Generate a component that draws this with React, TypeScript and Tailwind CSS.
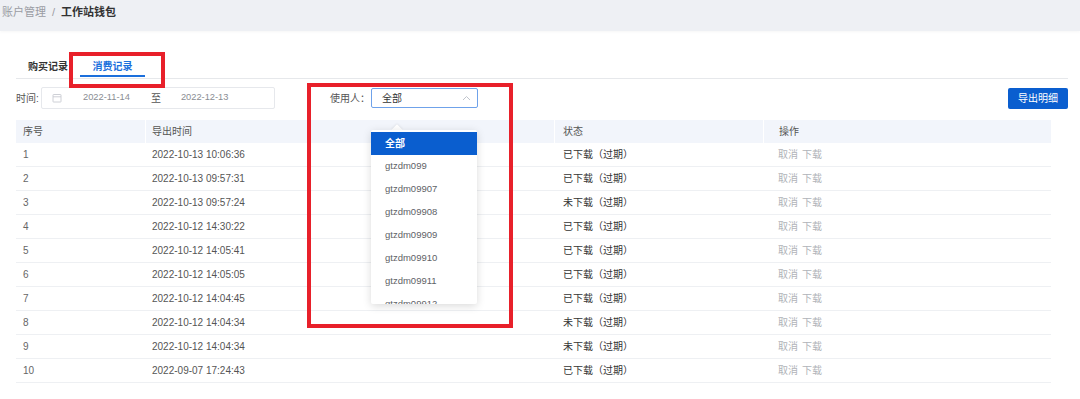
import { useState } from "react";

const ROWS = [
  { id: 1, time: "2022-10-13 10:06:36", status: "已下载（过期）" },
  { id: 2, time: "2022-10-13 09:57:31", status: "已下载（过期）" },
  { id: 3, time: "2022-10-13 09:57:24", status: "未下载（过期）" },
  { id: 4, time: "2022-10-12 14:30:22", status: "已下载（过期）" },
  { id: 5, time: "2022-10-12 14:05:41", status: "已下载（过期）" },
  { id: 6, time: "2022-10-12 14:05:05", status: "已下载（过期）" },
  { id: 7, time: "2022-10-12 14:04:45", status: "已下载（过期）" },
  { id: 8, time: "2022-10-12 14:04:34", status: "未下载（过期）" },
  { id: 9, time: "2022-10-12 14:04:34", status: "未下载（过期）" },
  { id: 10, time: "2022-09-07 17:24:43", status: "已下载（过期）" },
];

const USERS = ["全部", "gtzdm099", "gtzdm09907", "gtzdm09908", "gtzdm09909", "gtzdm09910", "gtzdm09911", "gtzdm09912"];

const FONT = "font-['Liberation_Sans','Noto_Sans_CJK_SC',sans-serif]";

function CalendarIcon() {
  return (
    <svg width="10" height="10" viewBox="0 0 10 10" fill="none" stroke="#c8cbd1" strokeWidth="0.9">
      <rect x="1" y="1.5" width="8" height="7.5" rx="0.5" />
      <line x1="1" y1="3.8" x2="9" y2="3.8" />
    </svg>
  );
}

export default function App() {
  const [tab, setTab] = useState(1);
  const [user, setUser] = useState("全部");

  return (
    <div className={`w-[1080px] h-[399px] overflow-hidden bg-white relative ${FONT}`}>
      {/* breadcrumb bar */}
      <div className="h-[31px] bg-[#eef0f4] shadow-[0_1px_3px_rgba(0,0,0,0.04)] flex items-center px-[2px] text-[11px] pb-[6px]">
        <span className="text-[#9a9ca3]">账户管理</span>
        <span className="text-[#9a9ca3] mx-[6px]">/</span>
        <span className="text-[#333] font-semibold">工作站钱包</span>
      </div>

      <div className="pl-[16px] pr-[12px] pt-[23px]">
        {/* tabs */}
        <div className="flex h-[25px] border-b border-[#e6e8eb]">
          {["购买记录", "消费记录"].map((t, i) => (
            <button
              key={t}
              onClick={() => setTab(i)}
              className={`relative h-full text-[10px] font-semibold ${i === 0 ? "w-[64px]" : "w-[65px]"} ${
                tab === i ? "text-[#1b6fdc]" : "text-[#333]"
              }`}
            >
              {t}
              {tab === i && <span className="absolute left-0 right-0 bottom-[1px] h-[2px] bg-[#1b6fdc]" />}
            </button>
          ))}
        </div>

        {/* filters */}
        <div className="flex items-center h-[22px] mt-[8px] text-[10px]">
          <span className="text-[#555] w-[25px]">时间:</span>
          <div className="w-[234px] h-[22px] border border-[#e6e8ec] rounded-[2px] flex items-center pl-[10px] text-[#8a8d93] text-[9.3px]">
            <CalendarIcon />
            <span className="ml-[21px]">2022-11-14</span>
            <span className="ml-[21px] text-[#555] text-[10px]">至</span>
            <span className="ml-[20px]">2022-12-13</span>
          </div>
          <span className="ml-[55px] text-[#555] w-[41px]">使用人：</span>
          <div className="relative">
            <div className="w-[107px] h-[20px] border border-[#6fa2ea] rounded-[2px] flex items-center justify-between pl-[10px] pr-[6px] text-[#333]">
              <span>{user}</span>
              <svg width="9" height="6" viewBox="0 0 9 6" fill="none" stroke="#c0c4cc" strokeWidth="1">
                <polyline points="1,5 4.5,1.5 8,5" />
              </svg>
            </div>
            {/* open dropdown */}
            <div className="absolute left-0 top-[42px] w-[106px] z-10">
              <div className="absolute left-[22px] -top-[4px] w-[8px] h-[8px] bg-white rotate-45 shadow-[-1px_-1px_2px_rgba(0,0,0,0.06)]" />
              <div className="relative bg-white rounded-[2px] shadow-[0_2px_8px_rgba(0,0,0,0.15)] h-[174px] overflow-hidden pt-[2px]">
                {USERS.map((u) => (
                  <div
                    key={u}
                    onClick={() => setUser(u)}
                    className={`h-[22.9px] flex items-center pl-[14px] text-[9.5px] ${
                      u === user ? "bg-[#0a5ecf] text-white font-bold text-[10px]" : "text-[#606266]"
                    }`}
                  >
                    {u}
                  </div>
                ))}
              </div>
            </div>
          </div>
          <button className="ml-auto w-[60px] h-[21px] bg-[#0a5ecf] text-white rounded-[2px] text-[10px]">导出明细</button>
        </div>

        {/* table */}
        <div className="w-[1035px] mt-[11px] text-[10px]">
          <div className="grid grid-cols-[129px_409px_209px_288px] h-[23px] bg-[#f2f5fb] text-[#555] items-center">
            <div className="pl-[7px]">序号</div>
            <div className="pl-[6px] h-full flex items-center border-l border-white">导出时间</div>
            <div className="pl-[8px] h-full flex items-center border-l border-white">状态</div>
            <div className="pl-[15px] h-full flex items-center border-l border-white">操作</div>
          </div>
          {ROWS.map((r) => (
            <div key={r.id} className="grid grid-cols-[129px_409px_209px_288px] h-[24px] items-center border-b border-[#eef0f3]">
              <div className="pl-[7px] text-[#666]">{r.id}</div>
              <div className="pl-[7px] text-[#555]">{r.time}</div>
              <div className="pl-[9px] text-[#333]">{r.status}</div>
              <div className="pl-[15px] text-[#b0b3b8] flex gap-[4px]">
                <span>取消</span>
                <span>下载</span>
              </div>
            </div>
          ))}
        </div>
      </div>

      {/* red annotation boxes */}
      <div className="absolute left-[69px] top-[52px] w-[96px] h-[36px] border-[4px] border-[#e8202a] pointer-events-none" />
      <div className="absolute left-[307px] top-[83px] w-[206px] h-[245px] border-[4px] border-[#e8202a] pointer-events-none" />
    </div>
  );
}
